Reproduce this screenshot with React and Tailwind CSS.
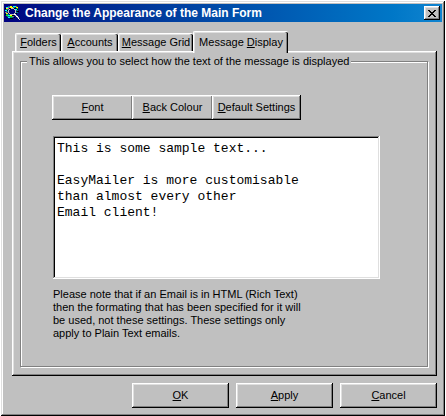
import { useState } from 'react';

const TABS = [
  { id: 'folders',  hot: 'F', before: '',         after: 'olders',      width: 'w-[46px]' },
  { id: 'accounts', hot: 'A', before: '',         after: 'ccounts',     width: 'w-[57px]' },
  { id: 'grid',     hot: 'M', before: '',         after: 'essage Grid', width: 'w-[75px]' },
  { id: 'display',  hot: 'D', before: 'Message ', after: 'isplay',      width: 'w-[95px]' },
];

const SAMPLE = `This is some sample text...

EasyMailer is more customisable
than almost every other
Email client!`;

const RAISED = 'bg-[#c0c0c0] shadow-[inset_-1px_-1px_#000,inset_1px_1px_#fff,inset_-2px_-2px_#808080,inset_2px_2px_#dfdfdf]';

// [x, y, width, colour] runs on a 16x16 grid
const ICON = [
  [3, 1, 2, '#008080'], [5, 1, 2, '#ffff00'], [8, 1, 3, '#00ffff'], [11, 1, 1, '#808000'],
  [1, 2, 2, '#00ffff'], [3, 2, 2, '#808080'], [5, 2, 3, '#ffff00'], [8, 2, 2, '#008080'], [11, 2, 2, '#ffff00'],
  [0, 3, 1, '#000'], [1, 3, 2, '#ffff00'], [3, 3, 1, '#ff00ff'], [4, 3, 2, '#000'], [6, 3, 3, '#c0c0c0'], [9, 3, 2, '#000'], [12, 3, 1, '#00ff00'],
  [1, 4, 3, '#008080'], [4, 4, 1, '#c0c0c0'], [5, 4, 4, '#000080'], [9, 4, 1, '#c0c0c0'], [10, 4, 2, '#00ffff'], [12, 4, 1, '#000'],
  [0, 5, 2, '#00ffff'], [2, 5, 1, '#000'], [3, 5, 1, '#c0c0c0'], [4, 5, 6, '#000080'], [10, 5, 1, '#c0c0c0'], [11, 5, 2, '#008080'],
  [1, 6, 2, '#008080'], [3, 6, 1, '#c0c0c0'], [4, 6, 6, '#000080'], [10, 6, 1, '#c0c0c0'], [12, 6, 2, '#000'],
  [0, 7, 2, '#808080'], [3, 7, 1, '#c0c0c0'], [4, 7, 6, '#000080'], [10, 7, 1, '#c0c0c0'], [11, 7, 2, '#008080'],
  [1, 8, 2, '#ffff00'], [4, 8, 1, '#c0c0c0'], [5, 8, 4, '#000080'], [9, 8, 1, '#c0c0c0'], [11, 8, 1, '#000'],
  [0, 9, 1, '#000'], [1, 9, 3, '#008080'], [5, 9, 4, '#c0c0c0'], [9, 9, 2, '#fff'],
  [1, 10, 2, '#00ff00'], [3, 10, 2, '#00ffff'], [5, 10, 2, '#ffff00'], [7, 10, 2, '#000'], [10, 10, 2, '#c0c0c0'],
  [2, 11, 3, '#008080'], [5, 11, 2, '#00ff00'], [7, 11, 2, '#808080'], [11, 11, 2, '#fff'],
  [3, 12, 2, '#00ffff'], [5, 12, 3, '#008080'], [9, 12, 1, '#000'], [12, 12, 2, '#c0c0c0'],
  [5, 13, 3, '#000'], [13, 13, 1, '#fff'],
  [14, 14, 1, '#c0c0c0'],
];

function AppIcon() {
  return (
    <svg viewBox="0 0 16 16" className="size-4 shrink-0" shapeRendering="crispEdges" aria-hidden="true">
      {ICON.map(([x, y, w, fill]) => <rect key={`${x}-${y}`} x={x} y={y} width={w} height={1} fill={fill} />)}
    </svg>
  );
}

function PushButton({ hot, label, className }) {
  return (
    <button type="button" className={`h-[25px] ${RAISED} ${className}`}>
      <u className="underline-offset-1">{hot}</u>{label}
    </button>
  );
}

export default function App() {
  const [active, setActive] = useState('display');
  const [text, setText] = useState(SAMPLE);

  return (
    <div className="bg-white pl-px pt-px pr-px font-['Liberation_Sans',Arial,sans-serif] text-[11px] leading-[13px] text-black">
      <main className="bg-[#c0c0c0] p-[3px] shadow-[inset_-1px_-1px_#000,inset_1px_1px_#dfdfdf,inset_-2px_-2px_#808080,inset_2px_2px_#fff]">
        <header className="flex h-[18px] items-center gap-1 bg-linear-to-r from-[#000080] to-[#1084d0] pl-px pr-[2px]">
          <AppIcon />
          <h1 className="flex-1 text-[12px] font-bold whitespace-nowrap text-white">
            Change the Appearance of the Main Form
          </h1>
          <button type="button" aria-label="Close" className={`flex h-[14px] w-4 items-center justify-center ${RAISED}`}>
            <svg viewBox="0 0 8 7" className="h-[7px] w-2" shapeRendering="crispEdges" aria-hidden="true">
              <path d="M0 0h2v1h1v1h2v-1h1v-1h2v1h-1v1h-1v1h-1v1h1v1h1v1h1v1h-2v-1h-1v-1h-2v1h-1v1h-2v-1h1v-1h1v-1h1v-1h-1v-1h-1v-1h-1z" />
            </svg>
          </button>
        </header>

        <div className="pt-[9px] pr-[5px] pb-[5px] pl-2">
          <div role="tablist" className="flex items-end pl-[3px]">
            {TABS.map((t) => (
              <button
                key={t.id}
                type="button"
                role="tab"
                id={`tab-${t.id}`}
                aria-selected={active === t.id}
                aria-controls="panel"
                onClick={() => setActive(t.id)}
                className={`rounded-t-[2px] border-t border-l border-white bg-[#c0c0c0] whitespace-nowrap shadow-[inset_-1px_0_#000,inset_-2px_0_#808080,inset_1px_1px_#dfdfdf] ${t.width} ${
                  active === t.id ? 'z-10 -mb-[2px] h-[22px]' : 'h-[18px]'
                }`}
              >
                {t.before}<u className="underline-offset-1">{t.hot}</u>{t.after}
              </button>
            ))}
          </div>

          <section id="panel" role="tabpanel" aria-labelledby={`tab-${active}`} className={`px-2 pt-1 pb-[9px] ${RAISED}`}>
            <fieldset className="mr-px min-w-0 border border-[#808080] pr-[47px] pb-[26px] pl-[31px] shadow-[inset_1px_1px_#fff,1px_1px_#fff]">
              <legend className="-ml-[25px] bg-[#c0c0c0] px-[2px] whitespace-nowrap">
                This allows you to select how the text of the message is displayed
              </legend>
              <div className="flex pt-[27px]">
                <PushButton hot="F" label="ont" className="-mr-px w-[81px]" />
                <PushButton hot="B" label="ack Colour" className="-mr-px w-[81px]" />
                <PushButton hot="D" label="efault Settings" className="w-[89px]" />
              </div>
              <div className="mt-4 ml-px">
                <textarea
                  aria-label="Sample text"
                  value={text}
                  onChange={(e) => setText(e.target.value)}
                  className="block h-[143px] w-full resize-none bg-white px-1 py-[5px] font-['Liberation_Mono','Courier_New',monospace] text-[13px] leading-4 shadow-[inset_-1px_-1px_#fff,inset_1px_1px_#808080,inset_-2px_-2px_#dfdfdf,inset_2px_2px_#000] outline-none"
                />
                <p className="mt-[9px] whitespace-nowrap">
                  Please note that if an Email is in HTML (Rich Text)<br />
                  then the formating that has been specified for it will<br />
                  be used, not these settings. These settings only<br />
                  apply to Plain Text emails.
                </p>
              </div>
            </fieldset>
          </section>

          <div className="mt-[7px] flex justify-end gap-[7px]">
            <PushButton hot="O" label="K" className="w-[97px]" />
            <PushButton hot="A" label="pply" className="w-[97px]" />
            <PushButton hot="C" label="ancel" className="w-[97px]" />
          </div>
        </div>
      </main>
    </div>
  );
}
